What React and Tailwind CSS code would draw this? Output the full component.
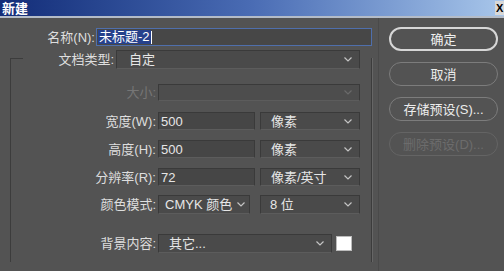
import React from 'react';

const font = { fontFamily: '"Liberation Sans", "Noto Sans CJK SC", sans-serif' };

const Chevron = ({ dim }) => (
    <svg width="8" height="5" viewBox="0 0 8 5" className="shrink-0">
        <polyline points="0.5,0.5 4,4 7.5,0.5" fill="none" stroke={dim ? '#6a6a6a' : '#c4c4c4'} strokeWidth="1.2" />
    </svg>
);

const Select = ({ value, className = '', dim, pad = 'pl-[10px] pr-[7px]' }) => (
    <div className={`flex items-center justify-between ${pad} bg-[#4a4a4a] border border-[#3a3a3a] border-b-[#5c5c5c] whitespace-nowrap ${className}`}>
        <span className={dim ? 'text-[#6e6e6e]' : 'text-[#e6e6e6]'}>{value}</span>
        <Chevron dim={dim} />
    </div>
);

const Input = ({ value, className = '' }) => (
    <div className={`flex items-center px-[2px] bg-[#464646] border border-[#3a3a3a] border-b-[#5c5c5c] text-[#e6e6e6] ${className}`}>
        {value}
    </div>
);

const Label = ({ children, dim }) => (
    <div className={`w-[147px] shrink-0 text-right pr-[2px] whitespace-nowrap ${dim ? 'text-[#767676]' : 'text-[#dedede]'}`}>{children}</div>
);

const Button = ({ children, primary, disabled }) => (
    <div
        className={`w-[109px] h-[24px] rounded-full flex items-center justify-center text-[13px] whitespace-nowrap ${
            primary
                ? 'border-2 border-[#d6d6d6] text-[#f0f0f0]'
                : disabled
                ? 'border border-[#646464] text-[#6c6c6c]'
                : 'border border-[#7c7c7c] text-[#ececec]'
        }`}
    >
        {children}
    </div>
);

export default function App() {
    return (
        <div className="w-[504px] h-[271px] overflow-hidden bg-[#535353] text-[13px] leading-none" style={font}>
            {/* title bar */}
            <div className="h-[16px] flex items-center justify-between bg-gradient-to-r from-[#132c78] via-[#4a6cb4] to-[#a8c6ea]">
                <span className="pl-[2px] text-white font-bold text-[13px]">新建</span>
                <div className="w-[9px] h-[14px] bg-[#d8d8d8] text-black text-[11px] font-bold flex items-center pl-[1px] overflow-hidden">X</div>
            </div>
            <div className="h-[2px] bg-[#b4bcc8]" />

            <div className="flex">
                {/* left form */}
                <div className="w-[378px] shrink-0">
                    <div className="flex items-center mt-[10px] h-[18px]">
                        <div className="w-[96px] text-right pr-[1px] text-[#dedede]">名称(N):</div>
                        <div className="w-[276px] h-[18px] flex items-center px-[1px] bg-[#474747] border border-[#4f6fac]">
                            <span className="bg-[#26418c] text-white px-[1px] leading-[14px]">未标题-2</span>
                            <span className="w-px h-[13px] bg-white" />
                        </div>
                    </div>
                    <div className="flex items-center mt-[4px] h-[19px]">
                        <div className="w-[116px] text-right pr-[2px] text-[#dedede]">文档类型:</div>
                        <Select value="自定" className="w-[244px] h-[19px]" pad="pl-[12px] pr-[7px]" />
                    </div>

                    {/* group box */}
                    <div className="ml-[10px] w-[362px] h-[204px] -mt-[11px] border-l border-r border-[#3c3c3c] shadow-[1px_0_0_#666]">
                        <div className="w-[12px] h-px bg-[#3c3c3c]" />
                        <div className="flex items-center mt-[25px] h-[17px]">
                            <Label dim>大小:</Label>
                            <Select value="" dim className="w-[202px] h-[17px] bg-[#4d4d4d]" />
                        </div>
                        <div className="flex items-center mt-[11px] h-[18px]">
                            <Label>宽度(W):</Label>
                            <Input value="500" className="w-[97px] h-[18px]" />
                            <Select value="像素" className="ml-[5px] w-[100px] h-[18px]" />
                        </div>
                        <div className="flex items-center mt-[10px] h-[18px]">
                            <Label>高度(H):</Label>
                            <Input value="500" className="w-[97px] h-[18px]" />
                            <Select value="像素" className="ml-[5px] w-[100px] h-[18px]" />
                        </div>
                        <div className="flex items-center mt-[10px] h-[18px]">
                            <Label>分辨率(R):</Label>
                            <Input value="72" className="w-[97px] h-[18px]" />
                            <Select value="像素/英寸" className="ml-[5px] w-[100px] h-[18px]" />
                        </div>
                        <div className="flex items-center mt-[9px] h-[19px]">
                            <Label>颜色模式:</Label>
                            <Select value="CMYK 颜色" className="w-[92px] h-[19px]" pad="pl-[6px] pr-[4px]" />
                            <Select value="8 位" className="ml-[10px] w-[100px] h-[19px]" pad="pl-[9px] pr-[7px]" />
                        </div>
                        <div className="flex items-center mt-[20px] h-[19px]">
                            <Label>背景内容:</Label>
                            <Select value="其它..." className="w-[174px] h-[19px]" />
                            <div className="ml-[4px] w-[16px] h-[15px] bg-white border border-[#bcbcbc]" />
                        </div>
                    </div>
                </div>

                {/* right buttons */}
                <div className="flex-1 flex flex-col pl-[10px] pt-[9px] gap-[11px] border-l border-[#4a4a4a] h-[253px]">
                    <Button primary>确定</Button>
                    <Button>取消</Button>
                    <Button>存储预设(S)...</Button>
                    <Button disabled>删除预设(D)...</Button>
                </div>
            </div>
        </div>
    );
}
